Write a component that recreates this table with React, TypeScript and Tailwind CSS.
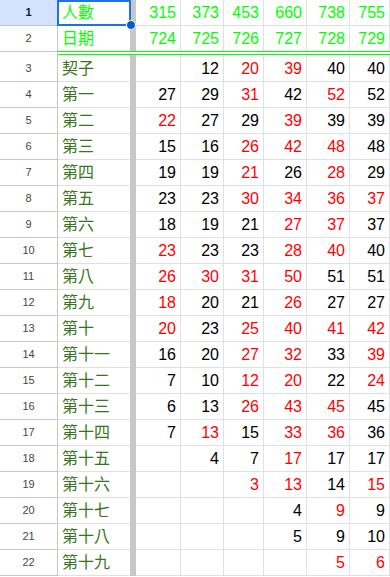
const COLS = ["w-[45px]", "w-[43px]", "w-[40px]", "w-[43px]", "w-[43px]", "w-[40px]"];

// "r" suffix marks a red number
const ROWS: { label: string; cells: string[] }[] = [
  { label: "人數", cells: ["315", "373", "453", "660", "738", "755"] },
  { label: "日期", cells: ["724", "725", "726", "727", "728", "729"] },
  { label: "契子", cells: ["", "12", "20r", "39r", "40", "40"] },
  { label: "第一", cells: ["27", "29", "31r", "42", "52r", "52"] },
  { label: "第二", cells: ["22r", "27", "29", "39r", "39", "39"] },
  { label: "第三", cells: ["15", "16", "26r", "42r", "48r", "48"] },
  { label: "第四", cells: ["19", "19", "21r", "26", "28r", "29"] },
  { label: "第五", cells: ["23", "23", "30r", "34r", "36r", "37r"] },
  { label: "第六", cells: ["18", "19", "21", "27r", "37r", "37"] },
  { label: "第七", cells: ["23r", "23", "23", "28r", "40r", "40"] },
  { label: "第八", cells: ["26r", "30r", "31r", "50r", "51", "51"] },
  { label: "第九", cells: ["18r", "20", "21", "26r", "27", "27"] },
  { label: "第十", cells: ["20r", "23", "25r", "40r", "41r", "42r"] },
  { label: "第十一", cells: ["16", "20", "27r", "32r", "33", "39r"] },
  { label: "第十二", cells: ["7", "10", "12r", "20r", "22", "24r"] },
  { label: "第十三", cells: ["6", "13", "26r", "43r", "45r", "45"] },
  { label: "第十四", cells: ["7", "13r", "15", "33r", "36r", "36"] },
  { label: "第十五", cells: ["", "4", "7", "17r", "17", "17"] },
  { label: "第十六", cells: ["", "", "3r", "13r", "14", "15r"] },
  { label: "第十七", cells: ["", "", "", "4", "9r", "9"] },
  { label: "第十八", cells: ["", "", "", "5", "9", "10"] },
  { label: "第十九", cells: ["", "", "", "", "5r", "6r"] },
];

const font = "font-['Liberation_Sans','Noto_Sans_CJK_TC',sans-serif]";

function Row({ n, label, cells }: { n: number; label: string; cells: string[] }) {
  const top = n <= 2;
  const height = n === 2 ? "h-[25px]" : n === 3 ? "h-[27px]" : "h-[26px]";
  const border = n === 2 ? "" : "border-b";
  return (
    <div className={`flex ${height}`}>
      {/* row number */}
      <div
        className={`w-[58px] shrink-0 flex items-center justify-center text-[11px] border-r border-[#c4c7c5] ${n === 2 ? "" : "border-b"} ${
          n === 1 ? "bg-[#d3e3fd] text-[#041e49] font-semibold" : "text-[#444746]"
        }`}
      >
        {n}
      </div>
      {/* label column */}
      <div
        className={`w-[72px] shrink-0 flex items-end pl-[4px] pb-[3px] text-[16px] leading-[18px] border-[#e1e1e1] ${border} ${
          top ? "text-[#00ff00]" : "text-[#38761d]"
        }`}
      >
        {label}
      </div>
      {/* frozen column divider */}
      <div className="w-[6px] shrink-0 bg-[#c7c7c7]" />
      {cells.map((c, i) => {
        const red = c.endsWith("r");
        const v = red ? c.slice(0, -1) : c;
        return (
          <div
            key={i}
            className={`${COLS[i]} shrink-0 flex items-end justify-end pr-[4px] pb-[3px] text-[16px] leading-[18px] border-r border-[#e1e1e1] ${border} ${
              top ? "text-[#00ff00]" : red ? "text-[#ff0000]" : "text-black"
            }`}
          >
            {v}
          </div>
        );
      })}
    </div>
  );
}

export default function App() {
  return (
    <div className={`relative w-[390px] h-[577px] overflow-hidden bg-white ${font}`}>
      {ROWS.map((r, i) => (
        <div key={i}>
          <Row n={i + 1} label={r.label} cells={r.cells} />
          {i === 1 && (
            <div className="flex h-[4px]">
              <div className="w-[58px] shrink-0 border-t border-r border-[#c4c7c5]" />
              <div className="flex-1 border-y border-[#00ff00] bg-white" />
            </div>
          )}
        </div>
      ))}

      {/* selected cell A1 */}
      <div className="absolute left-[57px] top-0 w-[74px] h-[26px] border-2 border-[#1a73e8] pointer-events-none" />
      <div className="absolute left-[126px] top-[20px] w-[10px] h-[10px] rounded-full bg-[#0b57d0] border border-white" />
    </div>
  );
}
